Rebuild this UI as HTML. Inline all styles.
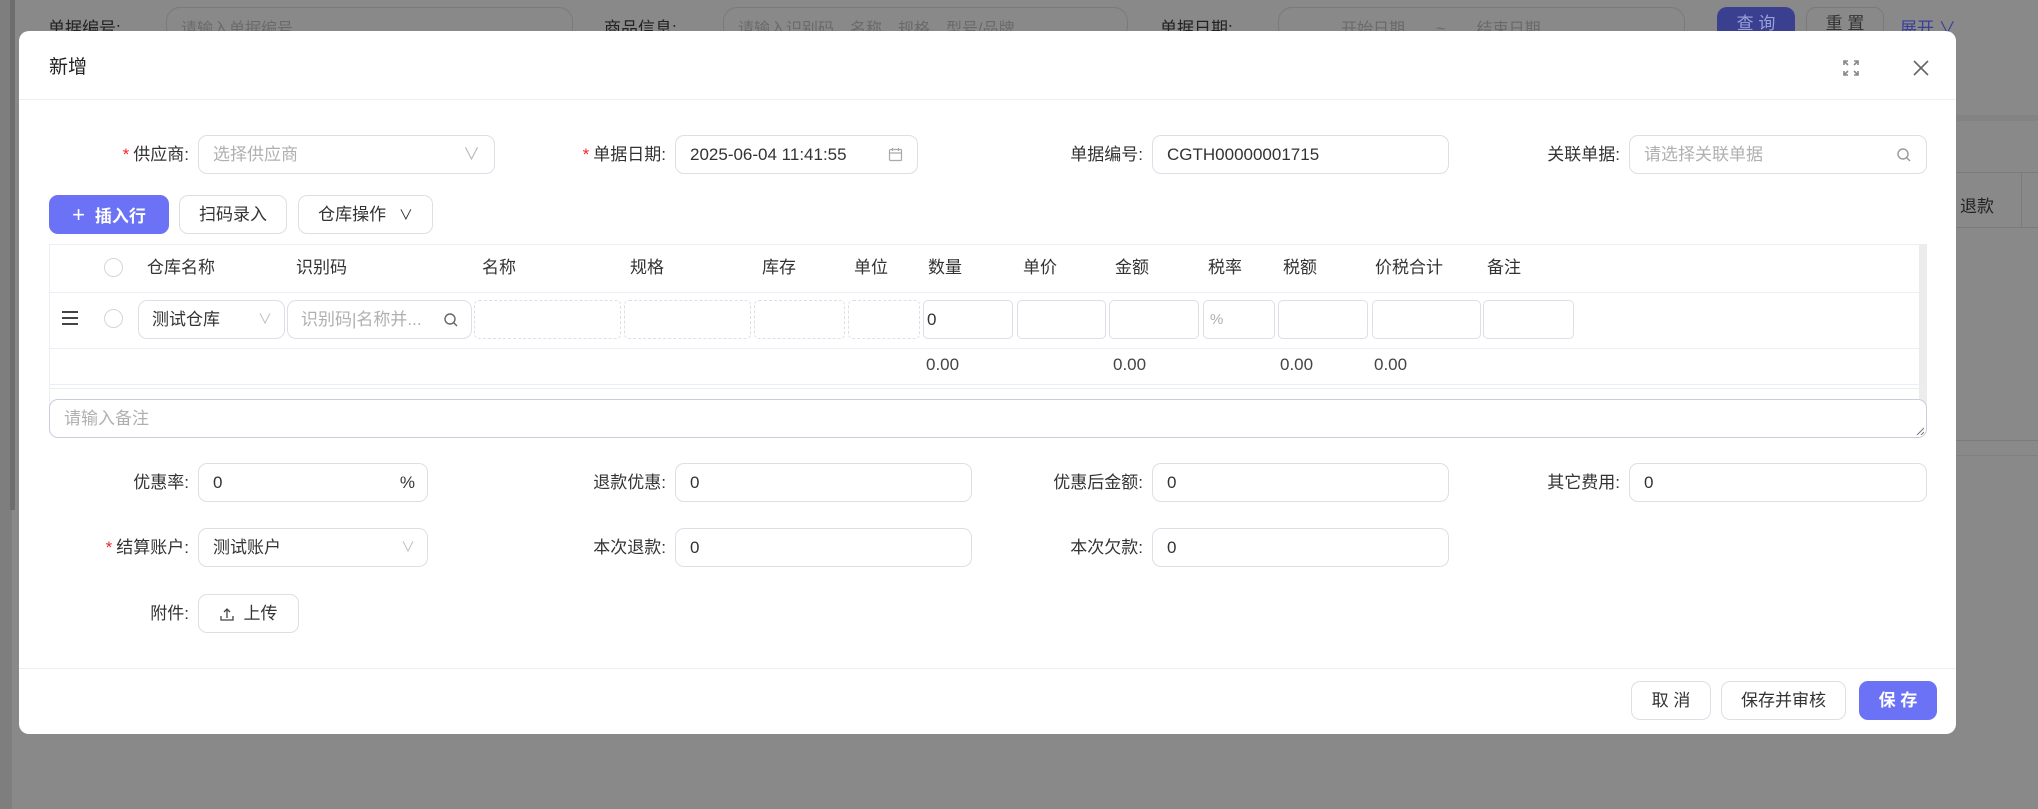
<!DOCTYPE html>
<html><head><meta charset="utf-8"><style>
*{box-sizing:border-box;margin:0;padding:0}
body{width:2038px;height:809px;background:#898989;font-family:"Liberation Sans","Noto Sans CJK SC",sans-serif;color:#333;font-size:17px;position:relative;overflow:hidden}
.a{position:absolute}
.bgt{color:#222;font-size:17px}
.bgi{border:1px solid #7a7a7a;border-radius:14px;height:34px;top:7px;color:#6a6a6a;font-size:16px;padding:7px 14px}
.modal{left:19px;top:31px;width:1937px;height:703px;background:#fff;border-radius:10px}
.lbl{font-size:17px;color:#333;text-align:right;line-height:39px;height:39px}
.lbl .r{color:#f5222d;margin-right:4px}
.inp{border:1px solid #dcdfe6;border-radius:9px;height:39px;line-height:37px;padding-left:14px;font-size:17px;color:#333;background:#fff}
.ph{color:#b0b0b0}
.btn{border:1px solid #dcdfe6;border-radius:9px;height:39px;line-height:37px;text-align:center;font-size:17px;color:#333;background:#fff}
.pri{background:#6b72f6;border-color:#6b72f6;color:#fff}
.th{font-size:17px;color:#333;line-height:20px}
.cell{border:1px solid #dcdfe6;border-radius:5px;height:39px;background:#fff;font-size:17px;line-height:37px;padding-left:6px}
.dash{border:1px dashed #dcdfe6}
.hl{height:1px;background:#ebeef5}
.sum{font-size:17px;color:#444}
.chk{width:19px;height:19px;border:1px solid #d6d6d6;border-radius:50%}
</style></head><body>
<div class="a" style="left:0;top:0;width:12px;height:809px;background:#7e7e7e"></div>
<div class="a" style="left:10px;top:0;width:5px;height:510px;background:#6d6d6d"></div>
<div class="a bgt" style="left:48px;top:14px">单据编号:</div>
<div class="a bgi" style="left:166px;width:407px">请输入单据编号</div>
<div class="a bgt" style="left:604px;top:14px">商品信息:</div>
<div class="a bgi" style="left:723px;width:405px">请输入识别码、名称、规格、型号/品牌</div>
<div class="a bgt" style="left:1160px;top:14px">单据日期:</div>
<div class="a bgi" style="left:1278px;width:407px;padding-left:62px">开始日期 &nbsp; &nbsp; &nbsp; ~ &nbsp; &nbsp; &nbsp; 结束日期</div>
<div class="a" style="left:1717px;top:7px;width:78px;height:34px;border-radius:10px;background:#3a3f8f;color:#9aa0d8;text-align:center;line-height:34px">查 询</div>
<div class="a" style="left:1806px;top:7px;width:78px;height:34px;border-radius:10px;border:1px solid #7a7a7a;color:#333;text-align:center;line-height:32px">重 置</div>
<div class="a" style="left:1900px;top:14px;color:#3a3f9a">展开 ∨</div>
<div class="a" style="left:1956px;top:115px;width:82px;height:6px;background:#838383"></div>
<div class="a" style="left:1956px;top:172px;width:82px;height:1px;background:#7b7b7b"></div>
<div class="a" style="left:1956px;top:227px;width:82px;height:1px;background:#7b7b7b"></div>
<div class="a" style="left:2021px;top:172px;width:1px;height:56px;background:#7b7b7b"></div>
<div class="a" style="left:1960px;top:192px;color:#222">退款</div>
<div class="a" style="left:1956px;top:440px;width:82px;height:1px;background:#7b7b7b"></div>
<div class="a" style="left:1956px;top:455px;width:82px;height:1px;background:#808080"></div>

<div class="a modal">
 <div class="a" style="left:30px;top:21px;font-size:19px;color:#222">新增</div>
 <svg class="a" style="left:1823px;top:28px" width="18" height="18" viewBox="0 0 18 18" fill="none" stroke="#888" stroke-width="1.6"><path d="M2 6V2h4M2 2l4 4M16 6V2h-4M16 2l-4 4M2 12v4h4M2 16l4-4M16 12v4h-4M16 16l-4-4"/></svg>
 <svg class="a" style="left:1893px;top:28px" width="18" height="18" viewBox="0 0 18 18" stroke="#666" stroke-width="1.6"><path d="M2 2L16 16M16 2L2 16"/></svg>
 <div class="a hl" style="left:0;top:68px;width:1937px"></div>

 <div class="a lbl" style="left:40px;top:104px;width:130px"><span class="r">*</span>供应商:</div>
 <div class="a inp ph" style="left:179px;top:104px;width:297px">选择供应商<span class="a" style="right:14px;top:0;color:#bbb">∨</span></div>
 <div class="a lbl" style="left:490px;top:104px;width:157px"><span class="r">*</span>单据日期:</div>
 <div class="a inp" style="left:656px;top:104px;width:243px">2025-06-04 11:41:55
  <svg class="a" style="right:14px;top:11px" width="15" height="15" viewBox="0 0 15 15" fill="none" stroke="#aaa" stroke-width="1.2"><rect x="1.5" y="2.5" width="12" height="11" rx="1"/><path d="M1.5 6h12M4.5 1v3M10.5 1v3"/></svg></div>
 <div class="a lbl" style="left:980px;top:104px;width:144px">单据编号:</div>
 <div class="a inp" style="left:1133px;top:104px;width:297px">CGTH00000001715</div>
 <div class="a lbl" style="left:1460px;top:104px;width:141px">关联单据:</div>
 <div class="a inp ph" style="left:1610px;top:104px;width:298px">请选择关联单据
  <svg class="a" style="right:14px;top:11px" width="16" height="16" viewBox="0 0 16 16" fill="none" stroke="#999" stroke-width="1.4"><circle cx="7" cy="7" r="5"/><path d="M10.5 10.5L14 14"/></svg></div>

 <div class="a btn pri" style="left:30px;top:164px;width:120px;font-weight:bold"><span style="font-weight:normal;font-size:22px;margin-right:10px">+</span>插入行</div>
 <div class="a btn" style="left:160px;top:164px;width:108px">扫码录入</div>
 <div class="a btn" style="left:279px;top:164px;width:135px">仓库操作 <span style="font-size:14px;margin-left:8px">∨</span></div>

 <div class="a" style="left:30px;top:213px;width:1878px;height:172px;border:1px solid #ebeef5;border-bottom:none"></div>
 <div class="a" style="left:1900px;top:213px;width:8px;height:172px;background:#ececec"></div>
 <div class="a hl" style="left:30px;top:261px;width:1870px"></div>
 <div class="a hl" style="left:30px;top:317px;width:1870px"></div>
 <div class="a hl" style="left:30px;top:353px;width:1870px"></div>
 <div class="a hl" style="left:30px;top:357px;width:1878px"></div>
 <div class="a chk" style="left:85px;top:227px"></div>
 <div class="a chk" style="left:85px;top:278px"></div>
 <div class="a" style="left:43px;top:280px;width:16px;height:14px;border-top:2px solid #444;border-bottom:2px solid #444"></div>
 <div class="a" style="left:43px;top:286px;width:16px;height:2px;background:#444"></div>
 <div class="a th" style="left:128px;top:227px">仓库名称</div>
 <div class="a th" style="left:277px;top:227px">识别码</div>
 <div class="a th" style="left:463px;top:227px">名称</div>
 <div class="a th" style="left:611px;top:227px">规格</div>
 <div class="a th" style="left:743px;top:227px">库存</div>
 <div class="a th" style="left:835px;top:227px">单位</div>
 <div class="a th" style="left:909px;top:227px">数量</div>
 <div class="a th" style="left:1004px;top:227px">单价</div>
 <div class="a th" style="left:1096px;top:227px">金额</div>
 <div class="a th" style="left:1189px;top:227px">税率</div>
 <div class="a th" style="left:1264px;top:227px">税额</div>
 <div class="a th" style="left:1356px;top:227px">价税合计</div>
 <div class="a th" style="left:1468px;top:227px">备注</div>

 <div class="a cell" style="left:119px;top:269px;width:147px;border-radius:9px;padding-left:13px">测试仓库<span class="a" style="right:12px;color:#bbb;font-size:14px">∨</span></div>
 <div class="a cell ph" style="left:268px;top:269px;width:185px;border-radius:9px;padding-left:13px">识别码|名称并...
  <svg class="a" style="right:12px;top:11px" width="16" height="16" viewBox="0 0 16 16" fill="none" stroke="#666" stroke-width="1.4"><circle cx="7" cy="7" r="5"/><path d="M10.5 10.5L14 14"/></svg></div>
 <div class="a cell dash" style="left:455px;top:269px;width:147px"></div>
 <div class="a cell dash" style="left:605px;top:269px;width:127px"></div>
 <div class="a cell dash" style="left:735px;top:269px;width:91px"></div>
 <div class="a cell dash" style="left:829px;top:269px;width:72px"></div>
 <div class="a cell" style="left:904px;top:269px;width:90px;padding-left:3px">0</div>
 <div class="a cell" style="left:998px;top:269px;width:89px"></div>
 <div class="a cell" style="left:1090px;top:269px;width:90px"></div>
 <div class="a cell ph" style="left:1184px;top:269px;width:72px;font-size:15px">%</div>
 <div class="a cell" style="left:1259px;top:269px;width:90px"></div>
 <div class="a cell" style="left:1353px;top:269px;width:109px"></div>
 <div class="a cell" style="left:1464px;top:269px;width:91px"></div>

 <div class="a sum" style="left:907px;top:324px">0.00</div>
 <div class="a sum" style="left:1094px;top:324px">0.00</div>
 <div class="a sum" style="left:1261px;top:324px">0.00</div>
 <div class="a sum" style="left:1355px;top:324px">0.00</div>

 <div class="a inp ph" style="left:30px;top:368px;width:1878px;border-color:#c8cde0">请输入备注
  <svg class="a" style="right:2px;bottom:2px" width="8" height="8" viewBox="0 0 8 8" stroke="#777" stroke-width="1"><path d="M1 8L8 1M5 8L8 5"/></svg></div>

 <div class="a lbl" style="left:40px;top:432px;width:130px">优惠率:</div>
 <div class="a inp" style="left:179px;top:432px;width:230px">0<span class="a" style="right:12px">%</span></div>
 <div class="a lbl" style="left:490px;top:432px;width:157px">退款优惠:</div>
 <div class="a inp" style="left:656px;top:432px;width:297px">0</div>
 <div class="a lbl" style="left:960px;top:432px;width:164px">优惠后金额:</div>
 <div class="a inp" style="left:1133px;top:432px;width:297px">0</div>
 <div class="a lbl" style="left:1460px;top:432px;width:141px">其它费用:</div>
 <div class="a inp" style="left:1610px;top:432px;width:298px">0</div>

 <div class="a lbl" style="left:40px;top:497px;width:130px"><span class="r">*</span>结算账户:</div>
 <div class="a inp" style="left:179px;top:497px;width:230px">测试账户<span class="a" style="right:12px;color:#bbb;font-size:14px">∨</span></div>
 <div class="a lbl" style="left:490px;top:497px;width:157px">本次退款:</div>
 <div class="a inp" style="left:656px;top:497px;width:297px">0</div>
 <div class="a lbl" style="left:980px;top:497px;width:144px">本次欠款:</div>
 <div class="a inp" style="left:1133px;top:497px;width:297px">0</div>

 <div class="a lbl" style="left:40px;top:563px;width:130px">附件:</div>
 <div class="a btn" style="left:179px;top:563px;width:101px">
  <svg style="vertical-align:-2px;margin-right:10px" width="14" height="14" viewBox="0 0 14 14" fill="none" stroke="#444" stroke-width="1.3"><path d="M7 11V2M4 5l3-3 3 3M1 9v4h12V9"/></svg>上传</div>

 <div class="a hl" style="left:0;top:637px;width:1937px"></div>
 <div class="a btn" style="left:1612px;top:650px;width:80px">取 消</div>
 <div class="a btn" style="left:1702px;top:650px;width:125px">保存并审核</div>
 <div class="a btn pri" style="left:1840px;top:650px;width:78px;font-weight:bold">保 存</div>
</div>
</body></html>
